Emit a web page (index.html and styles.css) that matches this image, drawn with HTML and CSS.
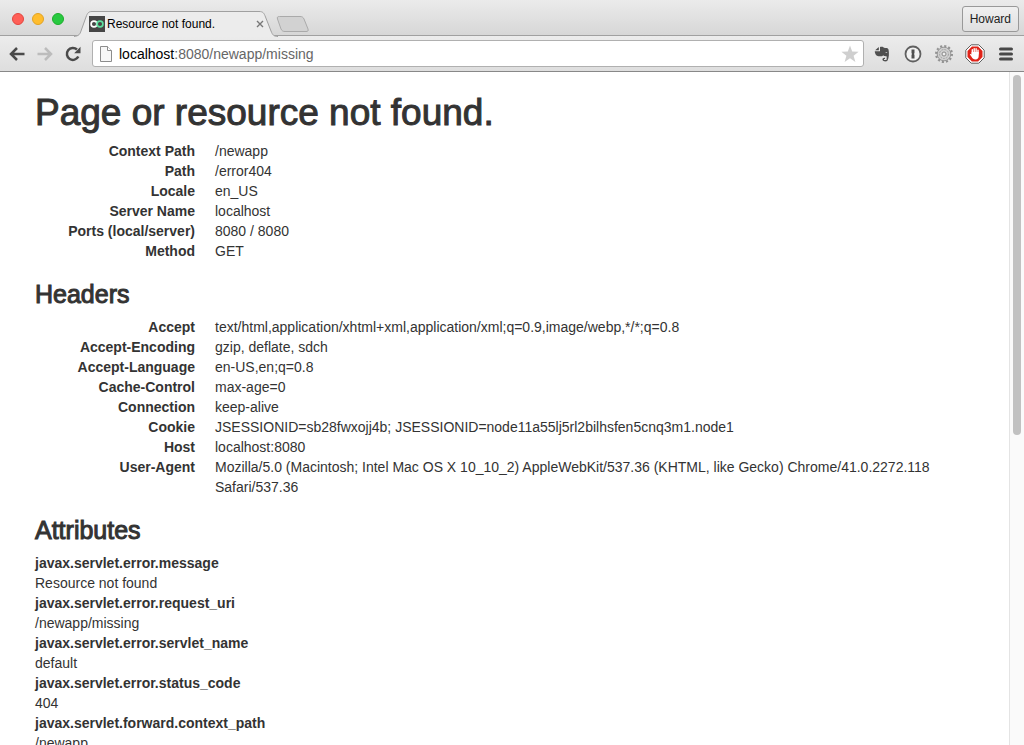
FILE: index.html
```html
<!DOCTYPE html>
<html lang="en">
<head>
    <meta charset="UTF-8">
    <meta name="viewport" content="width=device-width, initial-scale=1.0">
    <title>Resource not found.</title>
    <link rel="stylesheet" href="styles.css">
</head>
<body>

    <header class="chrome">
        <!-- Tab strip -->
        <div class="tab-strip">
            <div class="window-buttons">
                <button type="button" class="dot close" aria-label="Close window"></button>
                <button type="button" class="dot minimize" aria-label="Minimize window"></button>
                <button type="button" class="dot zoom" aria-label="Zoom window"></button>
            </div>

            <div class="tab">
                <svg class="tab-shape" viewBox="0 0 204 26" aria-hidden="true">
                    <path d="M0 25.5C5 25 6 23 7 20L12 6C13.500 2 14.500.5 18 .5H185C189 .5 190 2 191.500 6L197 20C198.500 24 200 25.500 204 25.500V26H0Z" fill="#ececec"/>
                    <path d="M0 25.500C5 25 6 23 7 20L12 6C13.500 2 14.500.5 18 .5H185C189 .5 190 2 191.500 6L197 20C198.500 24 200 25.500 204 25.500" fill="none" stroke="#a0a0a0"/>
                </svg>
                <svg class="favicon" viewBox="0 0 16 16" aria-hidden="true">
                    <path d="M0 0H16V16H0Z" fill="#464646"/>
                    <circle cx="5" cy="8" r="2.900" fill="none" stroke="#fff" stroke-width="1.700"/>
                    <circle cx="11" cy="8" r="2.900" fill="none" stroke="#5ee0a0" stroke-width="1.700"/>
                </svg>
                <span class="tab-title">Resource not found.</span>
                <button type="button" class="tab-close" aria-label="Close tab">
                    <svg viewBox="0 0 8 8"><path d="M1 1L7 7M7 1L1 7" stroke="#777" stroke-width="1.400"/></svg>
                </button>
            </div>

            <button type="button" class="new-tab" aria-label="New tab">
                <svg viewBox="0 0 34 18">
                    <path d="M3.500 1.500H24C26 1.500 27 2 28 4L32 14C32.500 16 32 16.500 30 16.500H9C7 16.500 6 16 5 14L1.500 4C1 2 1.500 1.500 3.500 1.500Z" fill="#d2d2d2" stroke="#aaa"/>
                </svg>
            </button>

            <button type="button" class="profile">Howard</button>
        </div>

        <!-- Toolbar -->
        <div class="toolbar">
            <nav class="nav-buttons">
                <button type="button" aria-label="Back">
                    <svg viewBox="0 0 16 16"><path d="M8 2L2 8L8 14M2.500 8H15.500" fill="none" stroke="#4a4a4a" stroke-width="2.500"/></svg>
                </button>
                <button type="button" aria-label="Forward">
                    <svg viewBox="0 0 16 16"><path d="M8 2L14 8L8 14M13.500 8H.5" fill="none" stroke="#bcbcbc" stroke-width="2.500"/></svg>
                </button>
                <button type="button" aria-label="Reload">
                    <svg viewBox="0 0 16 16"><path d="M13.300 10.500A6 6 0 1 1 12 3.500" fill="none" stroke="#4a4a4a" stroke-width="2.500"/><path d="M15.500.8V7.200H9.200Z" fill="#4a4a4a"/></svg>
                </button>
            </nav>

            <div class="address-bar">
                <svg class="page-icon" viewBox="0 0 12 16" aria-hidden="true">
                    <path d="M.5.5H7.500L11.500 4.500V15.500H.5Z" fill="#f7f7f7" stroke="#8c8c8c"/>
                    <path d="M7.500.5V4.500H11.500" fill="#fff" stroke="#8c8c8c"/>
                </svg>
                <a class="url" href="#"><span class="host">localhost</span>:8080/newapp/missing</a>
                <button type="button" class="star" aria-label="Bookmark this page">
                    <svg viewBox="0 0 18 18"><path d="M9 .5L11.200 6.500L17.600 6.800L12.600 10.700L14.400 17L9 13.300L3.600 17L5.400 10.700L.4 6.800L6.800 6.500Z" fill="#cfcfcf"/></svg>
                </button>
            </div>

            <div class="extensions">
                <button type="button" aria-label="Evernote">
                    <svg viewBox="0 0 20 20">
                        <path d="M6.800 3V6.200H3.200Z" fill="#484848"/>
                        <path d="M8 3C10 2.200 11.500 3 12 3.800C14 4 16 4 16.500 5.500C17.300 9 17 14 15.500 16.500C14.500 18 11 17.500 10.500 16C10.200 14.300 11.500 13.500 13 13.700V15H12V16H14.500L14.800 12.500C13.500 12 12 12.500 11.300 11.200C10 13 5 12.500 4 11C3.200 9.500 2.800 8.500 2.800 7.200H8Z" fill="#505050"/>
                        <path d="M13 8.500Q14.500 7.200 15.500 9Z" fill="#ddd"/>
                    </svg>
                </button>
                <button type="button" aria-label="1Password">
                    <svg viewBox="0 0 20 20">
                        <circle cx="10" cy="10" r="7.500" fill="#f2f2f2" stroke="#606060" stroke-width="1.800"/>
                        <path d="M8.500 5.500H11.500V9L11 10L11.500 11V14.500H8.500V11L9 10L8.500 9Z" fill="#505050"/>
                    </svg>
                </button>
                <button type="button" aria-label="Settings">
                    <svg viewBox="0 0 20 20">
                        <circle cx="10" cy="10" r="7.500" fill="none" stroke="#929292" stroke-width="3" stroke-dasharray="2 1.927"/>
                        <circle cx="10" cy="10" r="6.800" fill="#cfcfcf" stroke="#989898"/>
                        <circle cx="10" cy="10" r="4.500" fill="none" stroke="#a5a5a5" stroke-dasharray="2 1"/>
                        <circle cx="10" cy="10" r="2" fill="#eee" stroke="#888"/>
                    </svg>
                </button>
                <button type="button" aria-label="AdBlock">
                    <svg viewBox="0 0 20 20">
                        <path d="M6.200.8H13.800L19.200 6.200V13.800L13.800 19.200H6.200L.8 13.800V6.200Z" fill="#fff" stroke="#5e5e5e"/>
                        <path d="M6.900 2.500H13.100L17.500 6.900V13.100L13.100 17.500H6.900L2.500 13.100V6.900Z" fill="#e02318"/>
                        <path d="M7.300 10V5.800M9.200 9V4.600M11.100 9V4.800M13 10V6.200" stroke="#fff" stroke-width="1.400" stroke-linecap="round"/>
                        <path d="M6.600 8H13.700V12C13.700 14 12.500 15.500 10.500 15.500C8.500 15.500 7.500 14.500 6.500 12.800L4.800 10.300Q5.800 9.500 6.600 10.500Z" fill="#fff"/>
                    </svg>
                </button>
                <button type="button" aria-label="Menu">
                    <svg viewBox="0 0 20 20"><path d="M4.500 5H15.500M4.500 10H15.500M4.500 15H15.500" stroke="#484848" stroke-width="3" stroke-linecap="round"/></svg>
                </button>
            </div>
        </div>
    </header>

    <div class="viewport">
        <main class="content">
            <h1>Page or resource not found.</h1>
            <dl class="horizontal">
                <dt>Context Path</dt>
                <dd>/newapp</dd>
                <dt>Path</dt>
                <dd>/error404</dd>
                <dt>Locale</dt>
                <dd>en_US</dd>
                <dt>Server Name</dt>
                <dd>localhost</dd>
                <dt>Ports (local/server)</dt>
                <dd>8080 / 8080</dd>
                <dt>Method</dt>
                <dd>GET</dd>
            </dl>

            <h3>Headers</h3>
            <dl class="horizontal">
                <dt>Accept</dt>
                <dd>text/html,application/xhtml+xml,application/xml;q=0.9,image/webp,*/*;q=0.8</dd>
                <dt>Accept-Encoding</dt>
                <dd>gzip, deflate, sdch</dd>
                <dt>Accept-Language</dt>
                <dd>en-US,en;q=0.8</dd>
                <dt>Cache-Control</dt>
                <dd>max-age=0</dd>
                <dt>Connection</dt>
                <dd>keep-alive</dd>
                <dt>Cookie</dt>
                <dd>JSESSIONID=sb28fwxojj4b; JSESSIONID=node11a55lj5rl2bilhsfen5cnq3m1.node1</dd>
                <dt>Host</dt>
                <dd>localhost:8080</dd>
                <dt>User-Agent</dt>
                <dd>Mozilla/5.0 (Macintosh; Intel Mac OS X 10_10_2) AppleWebKit/537.36 (KHTML, like Gecko) Chrome/41.0.2272.118 Safari/537.36</dd>
            </dl>

            <h3>Attributes</h3>
            <dl>
                <dt>javax.servlet.error.message</dt>
                <dd>Resource not found</dd>
                <dt>javax.servlet.error.request_uri</dt>
                <dd>/newapp/missing</dd>
                <dt>javax.servlet.error.servlet_name</dt>
                <dd>default</dd>
                <dt>javax.servlet.error.status_code</dt>
                <dd>404</dd>
                <dt>javax.servlet.forward.context_path</dt>
                <dd>/newapp</dd>
            </dl>
        </main>
        <div class="scrollbar"><div class="thumb"></div></div>
    </div>

</body>
</html>
```
FILE: styles.css
```css
* {
    box-sizing: border-box;
}

body {
    display: flex;
    flex-direction: column;
    height: 100vh;
    margin: 0;
    overflow: hidden;
    background-color: #fff;
    color: #333;
    font-family: "Helvetica Neue", "Liberation Sans", Arial, sans-serif;
    font-size: 14px;
    line-height: 20px;
}

button {
    padding: 0;
    border: none;
    background: none;
    font-family: inherit;
}

svg {
    display: block;
}

/* Browser frame */
.chrome {
    flex: none;
    border-bottom: 1px solid #888;
}

.tab-strip {
    display: flex;
    align-items: flex-end;
    height: 36px;
    padding: 0 5px 0 12px;
    background: linear-gradient(#ebebeb, #d6d6d6);
    box-shadow: inset 0 -1px #a0a0a0;
}

.window-buttons {
    display: flex;
    gap: 8px;
    margin-right: 10px;
    padding-bottom: 11px;
}

.dot {
    width: 12px;
    height: 12px;
    border: 1px solid;
    border-radius: 50%;
}

.close {
    border-color: #e2463f;
    background-color: #ff5f57;
}

.minimize {
    border-color: #e1a325;
    background-color: #ffbd2e;
}

.zoom {
    border-color: #1dad2b;
    background-color: #28c940;
}

.tab {
    position: relative;
    display: flex;
    align-items: center;
    width: 204px;
    height: 25px;
    padding: 0 14px 0 15px;
}

.tab-shape {
    position: absolute;
    left: 0;
    top: 0;
    width: 204px;
    height: 26px;
}

.favicon {
    position: relative;
    width: 16px;
    height: 16px;
}

.tab-title {
    position: relative;
    flex: 1;
    margin-left: 2px;
    color: #000;
    font-size: 12px;
    white-space: nowrap;
}

.tab-close {
    position: relative;
    width: 8px;
    height: 8px;
}

.new-tab {
    width: 34px;
    height: 18px;
    margin: 0 auto 3px -2px;
}

.profile {
    height: 26px;
    margin-bottom: 4px;
    padding: 0 7px;
    border: 1px solid #999;
    border-radius: 3px;
    background: linear-gradient(#f0f0f0, #e0e0e0);
    color: #222;
    font-size: 12px;
}

.toolbar {
    display: flex;
    align-items: center;
    height: 35px;
    padding: 0 8px 0 9px;
    background: linear-gradient(#ececec, #dedede);
}

.nav-buttons {
    display: flex;
    gap: 12px;
    margin-right: 11px;
}

.nav-buttons svg {
    width: 16px;
    height: 16px;
}

.address-bar {
    display: flex;
    flex: 1;
    align-items: center;
    height: 27px;
    padding: 0 4px 0 7px;
    border: 1px solid #b0b0b0;
    border-radius: 3px;
    background-color: #fff;
}

.page-icon {
    width: 12px;
    height: 16px;
    margin-right: 7px;
}

.url {
    flex: 1;
    color: #666;
    text-decoration: none;
}

.host {
    color: #000;
}

.star svg {
    width: 18px;
    height: 18px;
}

.extensions {
    display: flex;
    gap: 11px;
    margin-left: 8px;
}

.extensions svg {
    width: 20px;
    height: 20px;
}

/* Error page */
.viewport {
    display: flex;
    flex: 1;
    min-height: 0;
}

.content {
    flex: 1;
    min-width: 0;
    padding: 20px 35px 0;
    overflow: hidden;
}

h1,
h3 {
    margin: 20px 0 10px;
    font-weight: 500;
    -webkit-text-stroke: 1px #333;
}

h1 {
    margin: 0 0 7px;
    font-size: 37px;
    line-height: 42px;
}

h3 {
    font-size: 25px;
    line-height: 26px;
}

dl {
    margin: 0 0 20px;
}

dt {
    font-weight: bold;
}

dd {
    margin: 0;
}

.horizontal {
    display: grid;
    grid-template-columns: 160px 1fr;
    column-gap: 20px;
}

.horizontal dt {
    text-align: right;
}

.scrollbar {
    flex: none;
    width: 15px;
    padding: 3px;
    border-left: 1px solid #e4e4e4;
    background-color: #fafafa;
}

.thumb {
    width: 8px;
    height: 54%;
    border-radius: 4px;
    background-color: #c1c1c1;
}
```
